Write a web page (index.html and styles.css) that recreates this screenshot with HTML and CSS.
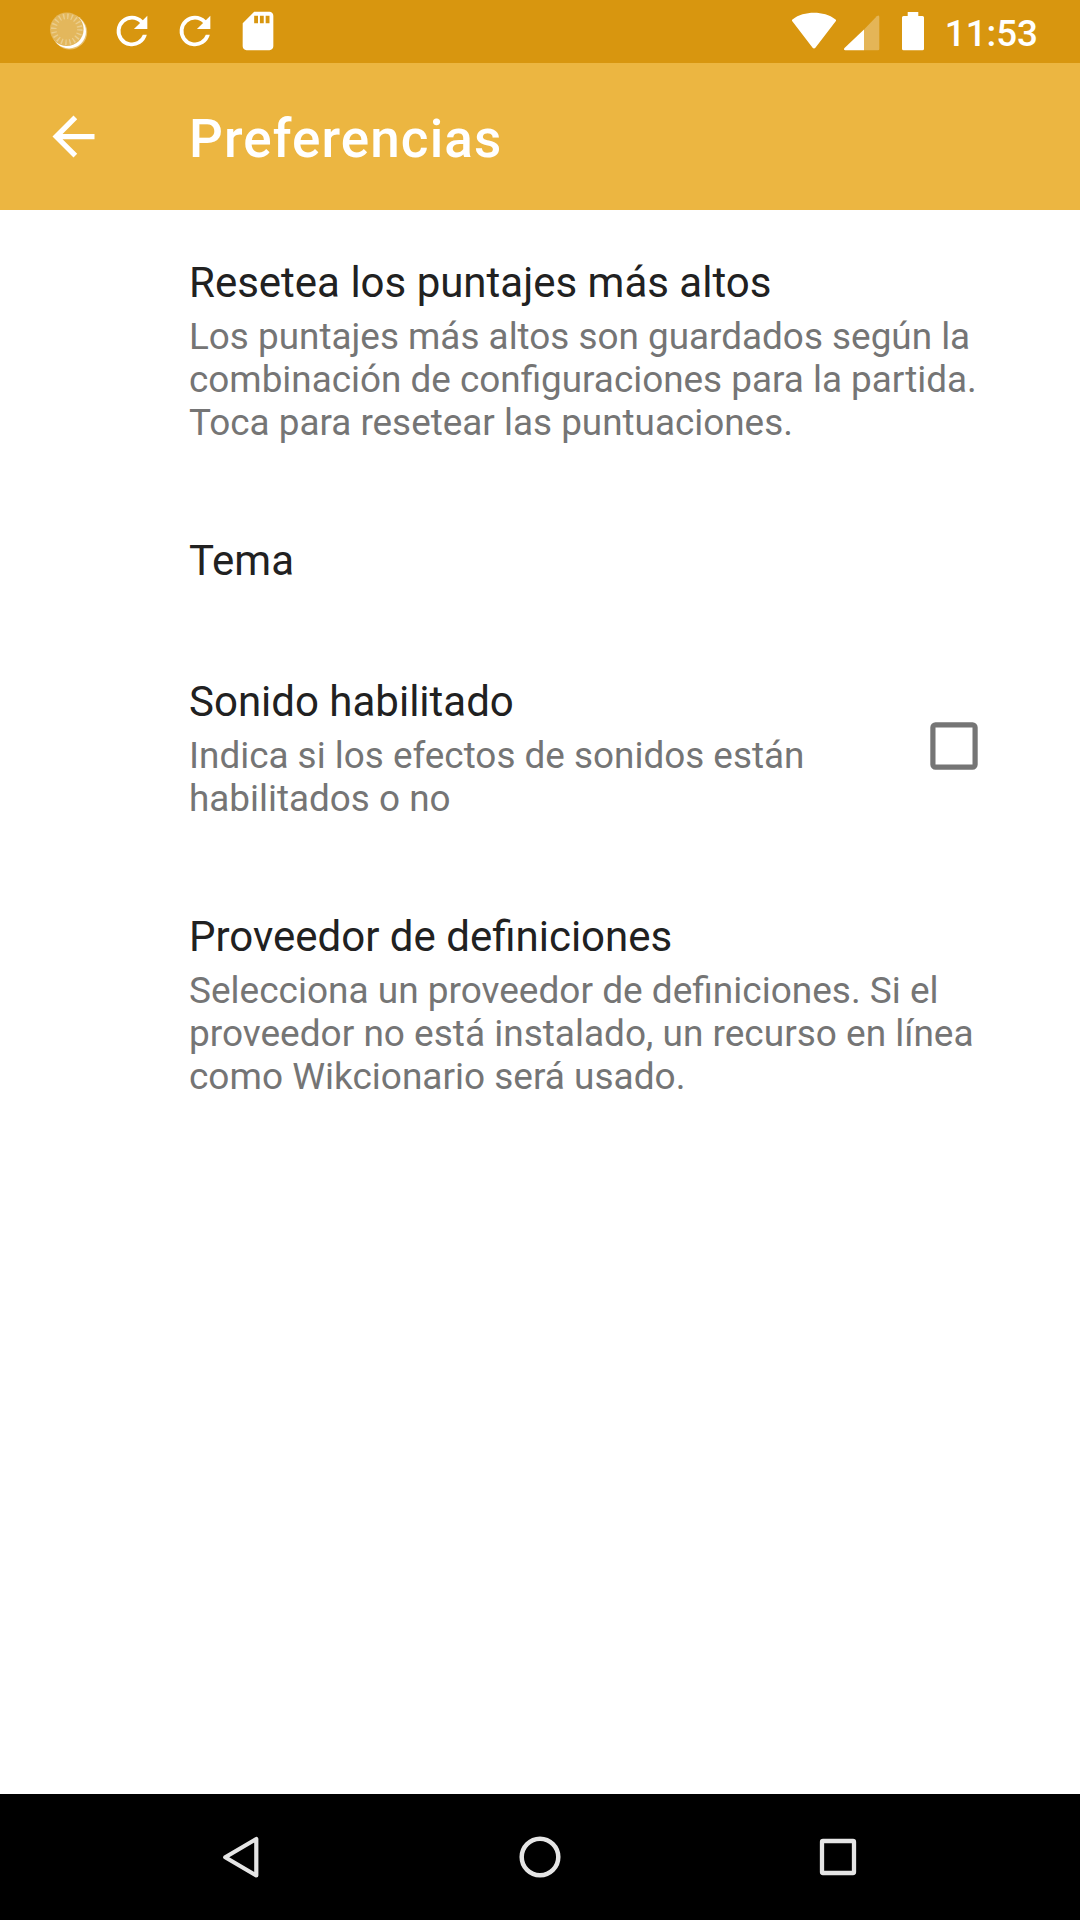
FILE: index.html
```html
<!DOCTYPE html>
<html lang="es">
<head>
<meta charset="utf-8">
<title>Preferencias</title>
<link rel="stylesheet" href="styles.css">
</head>
<body>
<div class="screen">
  <header class="status-bar">
    <div class="notifications">
      <svg class="status-icon" viewBox="0 0 46 46">
        <circle cx="23.700" cy="24" r="17.500" fill="#fff" fill-opacity=".4"/>
        <circle cx="23" cy="23.400" r="17" fill="#fff"/>
        <circle cx="20.800" cy="21.300" r="16.800" fill="#e3b75c"/>
        <circle cx="20.800" cy="21.300" r="13" fill="none" stroke="#ebcd8c" stroke-width="5.500" stroke-dasharray="1.400 2.684"/>
      </svg>
      <svg class="status-icon" viewBox="0 0 24 24"><path fill="#fff" d="M17.65 6.35A7.96 7.96 0 0 0 12 4a8 8 0 1 0 7.73 10h-2.08A6 6 0 1 1 12 6c1.66 0 3.14.69 4.22 1.78L13 11h7V4z"/></svg>
      <svg class="status-icon" viewBox="0 0 24 24"><path fill="#fff" d="M17.65 6.35A7.96 7.96 0 0 0 12 4a8 8 0 1 0 7.73 10h-2.08A6 6 0 1 1 12 6c1.66 0 3.14.69 4.22 1.78L13 11h7V4z"/></svg>
      <svg class="status-icon" viewBox="0 0 24 24"><path fill="#fff" d="M18 2h-8L4.02 8 4 20c0 1.100.9 2 2 2h12c1.100 0 2-.9 2-2V4c0-1.100-.9-2-2-2zm-6 6h-2V4h2zm3 0h-2V4h2zm3 0h-2V4h2z"/></svg>
    </div>
    <div class="system">
      <svg class="wifi" viewBox="0 0 46 38"><path fill="#fff" d="M1.500 9.600Q.2 8.200 1.800 7.200C13-1.300 33-1.300 44.200 7.200Q45.800 8.200 44.500 9.600L24.400 35.800Q23 37.400 21.600 35.800Z"/></svg>
      <svg class="signal" viewBox="0 0 36 36"><path fill="#fff" fill-opacity=".3" d="M20 14.500 32.800 1.300Q35.300-.7 35.300 2V34Q35.300 35.300 34 35.300H20Z"/><path fill="#fff" d="M20 14.500V35.300H1.300Q-.9 34.800.5 33Z"/></svg>
      <svg class="battery" viewBox="0 0 22 39"><path fill="#fff" d="M5.700 0H16.300V4H20.500Q22 4 22 5.500V36.800Q22 38.300 20.500 38.300H1.500Q0 38.300 0 36.800V5.500Q0 4 1.500 4H5.700Z"/></svg>
      <span class="clock">11:53</span>
    </div>
  </header>

  <div class="app-bar">
    <svg class="back" viewBox="0 0 24 24"><path fill="#fff" d="M20 11H7.830l5.590-5.590L12 4l-8 8 8 8 1.410-1.410L7.830 13H20z"/></svg>
    <h1 class="app-title">Preferencias</h1>
  </div>

  <main class="preferences">
    <section class="preference">
      <div class="text">
        <h2 class="title">Resetea los puntajes más altos</h2>
        <p class="summary">Los puntajes más altos son guardados según la combinación de configuraciones para la partida. Toca para resetear las puntuaciones.</p>
      </div>
    </section>
    <section class="preference">
      <div class="text"><h2 class="title">Tema</h2></div>
    </section>
    <section class="preference">
      <div class="text">
        <h2 class="title">Sonido habilitado</h2>
        <p class="summary">Indica si los efectos de sonidos están habilitados o no</p>
      </div>
      <svg class="checkbox" viewBox="0 0 48 48"><rect x="2.900" y="2.900" width="42.200" height="42.200" rx="2.600" fill="none" stroke="#757575" stroke-width="5.200"/></svg>
    </section>
    <section class="preference">
      <div class="text">
        <h2 class="title">Proveedor de definiciones</h2>
        <p class="summary summary-wide">Selecciona un proveedor de definiciones. Si el proveedor no está instalado, un recurso en línea como Wikcionario será usado.</p>
      </div>
    </section>
  </main>

  <nav class="nav-bar">
    <svg class="nav-icon" viewBox="0 0 60 60"><path fill="none" stroke="#e5e5e5" stroke-width="4.200" stroke-linejoin="round" d="M44.300 12V48.500L13.200 30.200Z"/></svg>
    <svg class="nav-icon" viewBox="0 0 60 60"><circle cx="30" cy="30" r="18.300" fill="none" stroke="#e5e5e5" stroke-width="4.500"/></svg>
    <svg class="nav-icon" viewBox="0 0 60 60"><rect x="14" y="14" width="32" height="32" rx="1" fill="none" stroke="#e5e5e5" stroke-width="4.300"/></svg>
  </nav>
</div>
</body>
</html>
```
FILE: styles.css
```css
* { box-sizing: border-box; margin: 0; }

body { font-family: Roboto, sans-serif; background: #fff; }

.screen {
  display: flex;
  flex-direction: column;
  width: 1080px;
  height: 1920px;
  overflow: hidden;
}

.status-bar {
  display: flex;
  justify-content: space-between;
  height: 63px;
  padding: 0 42px 0 45.600px;
  background: #d8960f;
}

.notifications { display: flex; gap: 17px; padding-top: 8.300px; }
.status-icon { width: 46px; height: 46px; }

.system { display: flex; align-items: flex-start; padding-top: 12px; }
.wifi { width: 46px; height: 38px; }
.signal { width: 36px; height: 36px; margin: 2.700px 22px 0 6.700px; }
.battery { width: 22px; height: 39px; margin-right: 21px; }
.clock {
  color: #fff;
  font-size: 36.750px;
  font-weight: 500;
  line-height: 43px;
}

.app-bar {
  display: flex;
  align-items: center;
  height: 147px;
  padding-left: 42px;
  background: #ecb641;
}
.back { width: 63px; height: 63px; margin-right: 84px; }
.app-title {
  padding-top: 5px;
  color: #fff;
  font-size: 53px;
  font-weight: 500;
  line-height: 62px;
  letter-spacing: 1.100px;
}

.preferences { flex: 1; }
.preference {
  display: flex;
  align-items: center;
  padding: 48px 84px 44px 189px;
}
.text { flex: 1; }
.title {
  color: #212121;
  font-size: 42px;
  font-weight: 400;
  line-height: 49px;
}
.summary {
  margin-top: 8px;
  color: #757575;
  font-size: 36.870px;
  line-height: 43px;
}
.summary-wide { font-size: 37px; }
.checkbox { width: 48px; height: 48px; margin: 0 18px 5px 84px; }

.nav-bar {
  display: flex;
  justify-content: center;
  align-items: center;
  gap: 238px;
  height: 126px;
  background: #000;
}
.nav-icon { width: 60px; height: 60px; }
```
